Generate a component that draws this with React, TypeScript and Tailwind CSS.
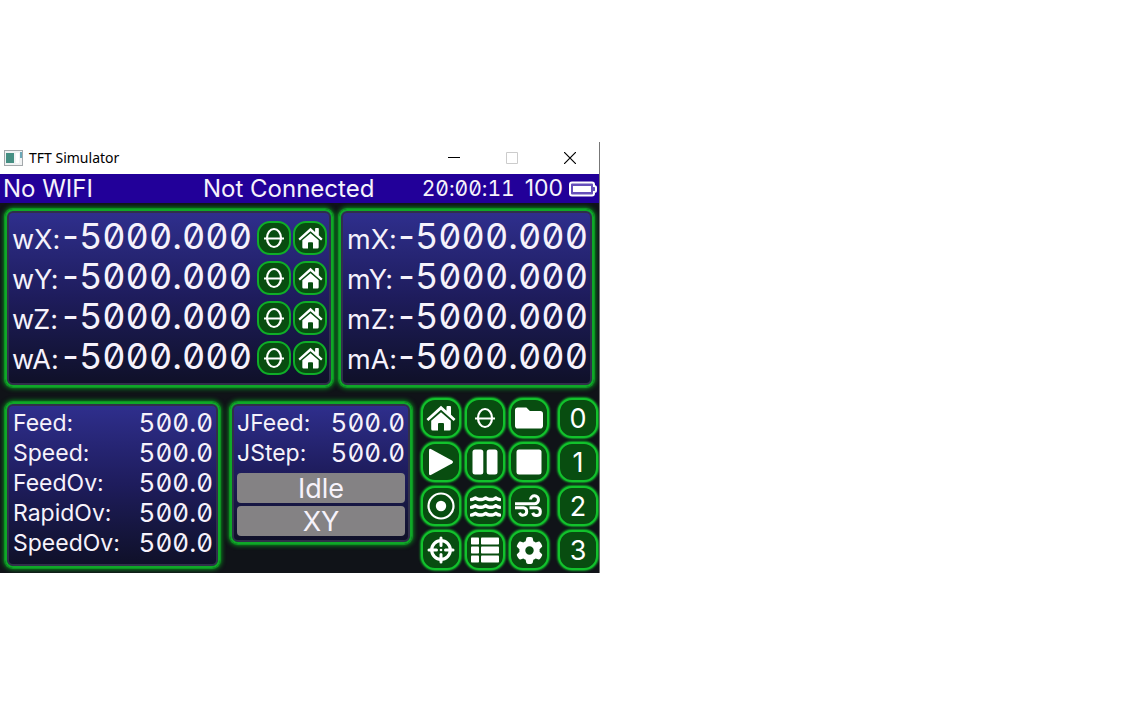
import { FaFolder, FaWater } from "react-icons/fa";
import { FaGear } from "react-icons/fa6";
import type { ReactNode } from "react";

const panel =
  "rounded-lg border-2 border-[#0fa828] bg-linear-to-b from-[#2f2f8e] via-[#1e1c5c] to-[#0f1028] shadow-[0_0_1px_1px_#0e9a24,0_0_4px_2px_#0b7a1c,inset_0_0_0_2px_#30304a]";
const key =
  "flex items-center justify-center rounded-[14px] border-2 border-[#12c22c] bg-[#084d10] text-white shadow-[0_0_2px_1px_#0fa526]";
const smallKey =
  "flex size-[34px] shrink-0 items-center justify-center rounded-[13px] border-2 border-[#0fae28] bg-[#084d10] text-white";
const digits = "[font-feature-settings:'tnum','zero','calt'_0]";

function ZeroIcon() {
  return (
    <svg viewBox="0 0 20 22" className="h-[22px] w-5 shrink-0" fill="none" stroke="currentColor" strokeWidth="2.200" aria-hidden="true">
      <ellipse cx="10" cy="11" rx="7" ry="9" />
      <path d="M0 11.500h20" strokeWidth="2" />
    </svg>
  );
}

function HomeIcon({ className }: { className: string }) {
  return (
    <svg viewBox="0 0 30 26" className={className} fill="currentColor" aria-hidden="true">
      <path d="M15 .8 20.500 5.800V2q0-1 1-1h2.500q1 0 1 1v7.800l4.500 4.100-1.800 2L15 4.800 2.300 15.900.500 13.900Z" />
      <path d="M15 7.200 24.800 15.800V24q0 1.500-1.500 1.500H18v-6.500q0-1-1-1h-4q-1 0-1 1v6.500H6.700q-1.500 0-1.500-1.500v-8.200Z" />
    </svg>
  );
}

function PlayIcon() {
  return (
    <svg viewBox="0 0 26 28" className="h-7 w-[26px]" fill="currentColor" aria-hidden="true">
      <path d="M1 2.500Q1 0 3.300 1.200L24 12.500q2 1.500 0 3L3.300 26.800Q1 28 1 25.500Z" />
    </svg>
  );
}

function PauseIcon() {
  return (
    <svg viewBox="0 0 26 26" className="size-[26px]" fill="currentColor" aria-hidden="true">
      <rect x="0.500" y="0.500" width="10.800" height="25" rx="2.500" />
      <rect x="14.700" y="0.500" width="10.800" height="25" rx="2.500" />
    </svg>
  );
}

function StopIcon() {
  return (
    <svg viewBox="0 0 26 26" className="size-[26px]" fill="currentColor" aria-hidden="true">
      <rect x="0.500" y="0.500" width="25" height="25" rx="2.500" />
    </svg>
  );
}

function TargetIcon() {
  return (
    <svg viewBox="0 0 28 28" className="size-7" aria-hidden="true">
      <circle cx="14" cy="14" r="12.500" fill="none" stroke="currentColor" strokeWidth="2.200" />
      <circle cx="14" cy="14" r="5.200" fill="currentColor" />
    </svg>
  );
}

function WindIcon() {
  return (
    <svg viewBox="0 0 28 24" className="h-6 w-7" fill="none" stroke="currentColor" strokeWidth="3" aria-hidden="true">
      <path d="M0 9.800h19.500a4 4 0 1 0-4-4.300" />
      <path d="M0 13.800h8.500a3.700 3.700 0 1 1-4 4.800" />
      <path d="M14.500 13.800h7.500a3.900 3.900 0 1 1-4.300 5" />
    </svg>
  );
}

function ProbeIcon() {
  return (
    <svg viewBox="0 0 28 28" className="size-7" fill="none" stroke="currentColor" strokeLinecap="round" aria-hidden="true">
      <circle cx="14" cy="14" r="9.300" strokeWidth="3.200" />
      <path d="M14 2v7.500M14 18.500V26M2 14h7.500M18.500 14H26" strokeWidth="3" />
      <circle cx="14" cy="14" r="1.300" fill="currentColor" stroke="none" />
    </svg>
  );
}

function ListIcon() {
  return (
    <svg viewBox="0 0 28 26" className="h-[26px] w-7" fill="currentColor" aria-hidden="true">
      {[0.5, 9.5, 18.5].map((y) => (
        <g key={y}>
          <rect x="0" y={y} width="8" height="7" rx="0.800" />
          <rect x="10" y={y} width="18" height="7" rx="0.800" />
        </g>
      ))}
    </svg>
  );
}

function Battery() {
  return (
    <svg viewBox="0 0 28 16" className="h-4 w-7" aria-label="Battery full">
      <path d="M3 1.500h20q2 0 2 2v1.500q2 0 2 1.500v3q0 1.500-2 1.500v1.500q0 2-2 2H3q-2 0-2-2v-9q0-2 2-2Z" fill="#6650bb" stroke="#fff" strokeWidth="2" />
      <rect x="4" y="5" width="18" height="6" fill="#fff" />
    </svg>
  );
}

function Key({ label, children }: { label: string; children: ReactNode }) {
  return (
    <button type="button" aria-label={label} className={`${key} size-10`}>
      {children}
    </button>
  );
}

function AxisRow({ name, controls }: { name: string; controls?: boolean }) {
  return (
    <div className="flex h-10 items-center">
      <div className="flex grow items-baseline justify-between">
        <span className="text-[27px]">{name}:</span>
        <span className="text-[36px]">
          -<span className={digits}>5000.000</span>
        </span>
      </div>
      {controls && (
        <span className="mt-1 ml-[5px] flex gap-0.5">
          <button type="button" aria-label={`Zero ${name}`} className={smallKey}>
            <ZeroIcon />
          </button>
          <button type="button" aria-label={`Home ${name}`} className={smallKey}>
            <HomeIcon className="h-[22px] w-[25px]" />
          </button>
        </span>
      )}
    </div>
  );
}

function ValueRow({ name }: { name: string }) {
  return (
    <div className="flex h-[30px] items-center justify-between">
      <span className="text-[23px]">{name}:</span>
      <span className={`text-[26px] ${digits}`}>500.0</span>
    </div>
  );
}

export default function App() {
  return (
    <main className="min-h-screen bg-white pt-[142px] font-['Inter',sans-serif] leading-none [font-feature-settings:'calt'_0]">
      <section className="w-[600px] border-r border-[#777] bg-white">
        <header className="flex h-8 items-center pl-1 font-['Noto_Sans',sans-serif] text-sm text-black">
          <svg viewBox="0 0 20 16" className="mr-[5px] h-4 w-5" aria-hidden="true">
            <rect x="0.500" y="0.500" width="18" height="15" fill="#f0f2f3" stroke="#a3a8ab" />
            <rect x="2" y="3" width="8" height="10" fill="#458f83" />
            <rect x="12" y="3" width="3" height="10" fill="#fff" />
            <path d="M17 2v6" stroke="#3f8fa5" strokeWidth="1.500" />
          </svg>
          <h1 className="grow">TFT Simulator</h1>
          <button type="button" aria-label="Minimize" className="flex h-8 w-[58px] items-center justify-center">
            <svg viewBox="0 0 12 12" className="size-3"><path d="M0 5.500h12" stroke="#000" /></svg>
          </button>
          <button type="button" aria-label="Maximize" disabled className="flex h-8 w-[58px] items-center justify-center">
            <svg viewBox="0 0 12 12" className="size-3"><path d="M.5.5h11v11H.5Z" fill="none" stroke="#ccc" /></svg>
          </button>
          <button type="button" aria-label="Close" className="flex h-8 w-[58px] items-center justify-center">
            <svg viewBox="0 0 12 12" className="size-3"><path d="M0 0l12 12M12 0L0 12" stroke="#000" strokeWidth="1.200" /></svg>
          </button>
        </header>

        <div className="overflow-hidden bg-[#101318] text-[#f6f2fb]">
          <div className="flex h-[29px] items-center bg-[#220099] pr-0.5 pl-[3px] text-[24px]">
            <span className="w-[200px]">No WIFI</span>
            <span className="grow">Not Connected</span>
            <time className={`mr-2.5 text-[21px] ${digits}`}>20:00:11</time>
            <span className="mr-1.5 text-[23px]">100</span>
            <Battery />
          </div>

          <div className="flex gap-1.5 px-[5px] pt-1.5">
            <div className={`${panel} h-[178px] w-[328px] pt-[5px] pr-1 pl-[5px]`}>
              {["wX", "wY", "wZ", "wA"].map((n) => <AxisRow key={n} name={n} controls />)}
            </div>
            <div className={`${panel} h-[178px] grow pt-[5px] pr-1 pl-1.5`}>
              {["mX", "mY", "mZ", "mA"].map((n) => <AxisRow key={n} name={n} />)}
            </div>
          </div>

          <div className="flex items-start pt-[11px] pb-[3px] pl-[5px]">
            <div className={`${panel} mt-1 mr-2.5 h-[166px] w-[215px] pt-1 pr-[5px] pl-1.5`}>
              {["Feed", "Speed", "FeedOv", "RapidOv", "SpeedOv"].map((n) => <ValueRow key={n} name={n} />)}
            </div>
            <div className={`${panel} mt-1 h-[142px] w-[182px] pt-1 pr-[5px] pl-[5px]`}>
              <ValueRow name="JFeed" />
              <ValueRow name="JStep" />
              <div className="mt-[5px] flex flex-col gap-[3px] text-[27px]">
                <button type="button" className="h-[30px] rounded-sm bg-[#848284]">Idle</button>
                <button type="button" className="h-[30px] rounded-sm bg-[#848284]">XY</button>
              </div>
            </div>
            <div className="ml-[9px] grid grid-cols-3 gap-1">
              <Key label="Home"><HomeIcon className="h-[26px] w-[30px]" /></Key>
              <Key label="Zero"><ZeroIcon /></Key>
              <Key label="Files"><FaFolder size={28} /></Key>
              <Key label="Run"><PlayIcon /></Key>
              <Key label="Pause"><PauseIcon /></Key>
              <Key label="Stop"><StopIcon /></Key>
              <Key label="Spindle"><TargetIcon /></Key>
              <Key label="Flood coolant"><FaWater size={31} /></Key>
              <Key label="Mist coolant"><WindIcon /></Key>
              <Key label="Probe"><ProbeIcon /></Key>
              <Key label="List"><ListIcon /></Key>
              <Key label="Settings"><FaGear size={27} /></Key>
            </div>
            <div className="ml-[9px] grid gap-1 text-[27px]">
              {["0", "1", "2", "3"].map((n) => <button type="button" key={n} className={`${key} size-10`}>{n}</button>)}
            </div>
          </div>
        </div>
      </section>
    </main>
  );
}
